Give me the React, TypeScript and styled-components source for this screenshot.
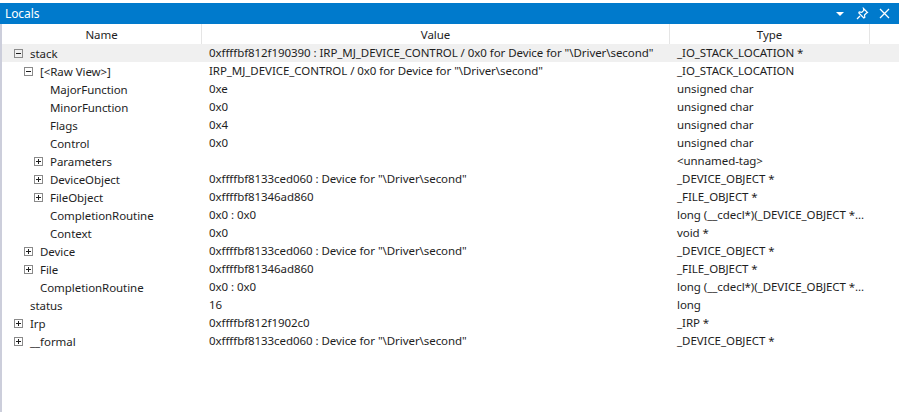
import React from 'react';
import styled, { createGlobalStyle } from 'styled-components';

const GlobalStyle = createGlobalStyle`
  html, body {
    margin: 0;
    padding: 0;
    background: #ffffff;
  }
  body {
    font-family: 'Noto Sans', 'Open Sans', sans-serif;
  }
`;

const COLS = '200px 468px 200px 1fr';

export const Window = styled.div`
  width: 899px;
  height: 412px;
  display: flex;
  flex-direction: column;
  background: #ffffff;
  padding-top: 3px;
  box-sizing: border-box;
  overflow: hidden;
`;

export const TitleBar = styled.div`
  display: flex;
  align-items: center;
  height: 21px;
  background: #007acc;
  color: #ffffff;
  padding: 0 4px 0 5px;
  font-size: 12px;
  letter-spacing: -0.1px;
`;

export const Title = styled.span`
  flex-grow: 1;
`;

export const TitleButton = styled.span`
  display: flex;
  align-items: center;
  justify-content: center;
  width: 22px;
  height: 21px;
`;

export const Body = styled.div`
  flex-grow: 1;
  border-left: 2px solid #cccedb;
  display: flex;
  flex-direction: column;
`;

export const HeaderRow = styled.div`
  display: grid;
  grid-template-columns: ${COLS};
  height: 20px;
  font-size: 11.5px;
  letter-spacing: -0.05px;
  color: #1e1e1e;
`;

export const HeaderCell = styled.div`
  display: flex;
  align-items: center;
  justify-content: center;
  border-right: 1px solid #e5e5e5;
`;

export const Row = styled.div<{ $selected?: boolean }>`
  display: grid;
  grid-template-columns: ${COLS};
  height: 18px;
  font-size: 11.5px;
  letter-spacing: -0.06px;
  color: #1e1e1e;
  background: ${(p) => (p.$selected ? '#f0f0f0' : 'transparent')};
  white-space: nowrap;
`;

export const NameCell = styled.div<{ $level: number }>`
  display: flex;
  align-items: center;
  padding-left: ${(p) => 12 + p.$level * 10}px;
  overflow: hidden;
`;

export const Cell = styled.div`
  display: block;
  line-height: 18px;
  padding-left: 7px;
  overflow: hidden;
  text-overflow: clip;
`;

export const Expander = styled.span<{ $hidden?: boolean }>`
  position: relative;
  width: 9px;
  height: 9px;
  box-sizing: border-box;
  border: 1px solid #8a8a8a;
  margin-right: 7px;
  flex-shrink: 0;
  visibility: ${(p) => (p.$hidden ? 'hidden' : 'visible')};
`;

export const Bar = styled.span<{ $vertical?: boolean }>`
  position: absolute;
  background: #1e1e1e;
  ${(p) =>
    p.$vertical
      ? 'left: 3px; top: 1px; width: 1px; height: 5px;'
      : 'left: 1px; top: 3px; width: 5px; height: 1px;'}
`;

type Node = {
  name: string;
  value: string;
  type: string;
  level: number;
  expand?: 'plus' | 'minus';
  selected?: boolean;
};

const rows: Node[] = [
  { name: 'stack', value: '0xffffbf812f190390 : IRP_MJ_DEVICE_CONTROL / 0x0 for Device for "\\Driver\\second"', type: '_IO_STACK_LOCATION *', level: 0, expand: 'minus', selected: true },
  { name: '[<Raw View>]', value: 'IRP_MJ_DEVICE_CONTROL / 0x0 for Device for "\\Driver\\second"', type: '_IO_STACK_LOCATION', level: 1, expand: 'minus' },
  { name: 'MajorFunction', value: '0xe', type: 'unsigned char', level: 2 },
  { name: 'MinorFunction', value: '0x0', type: 'unsigned char', level: 2 },
  { name: 'Flags', value: '0x4', type: 'unsigned char', level: 2 },
  { name: 'Control', value: '0x0', type: 'unsigned char', level: 2 },
  { name: 'Parameters', value: '', type: '<unnamed-tag>', level: 2, expand: 'plus' },
  { name: 'DeviceObject', value: '0xffffbf8133ced060 : Device for "\\Driver\\second"', type: '_DEVICE_OBJECT *', level: 2, expand: 'plus' },
  { name: 'FileObject', value: '0xffffbf81346ad860', type: '_FILE_OBJECT *', level: 2, expand: 'plus' },
  { name: 'CompletionRoutine', value: '0x0 : 0x0', type: 'long (__cdecl*)(_DEVICE_OBJECT *...', level: 2 },
  { name: 'Context', value: '0x0', type: 'void *', level: 2 },
  { name: 'Device', value: '0xffffbf8133ced060 : Device for "\\Driver\\second"', type: '_DEVICE_OBJECT *', level: 1, expand: 'plus' },
  { name: 'File', value: '0xffffbf81346ad860', type: '_FILE_OBJECT *', level: 1, expand: 'plus' },
  { name: 'CompletionRoutine', value: '0x0 : 0x0', type: 'long (__cdecl*)(_DEVICE_OBJECT *...', level: 1 },
  { name: 'status', value: '16', type: 'long', level: 0 },
  { name: 'Irp', value: '0xffffbf812f1902c0', type: '_IRP *', level: 0, expand: 'plus' },
  { name: '__formal', value: '0xffffbf8133ced060 : Device for "\\Driver\\second"', type: '_DEVICE_OBJECT *', level: 0, expand: 'plus' },
];

const DropIcon = () => (
  <svg width="10" height="6" viewBox="0 0 10 6">
    <path d="M1 1h8L5 5z" fill="#ffffff" />
  </svg>
);

const PinIcon = () => (
  <svg width="13" height="13" viewBox="0 0 13 13" fill="none" stroke="#ffffff" strokeWidth="1.2">
    <path d="M7.5 1.5l4 4-1 .5-2 2 .3 2.5-1 .5-5-5 .5-1 2.5.3 2-2z" />
    <path d="M4 9l-3 3" />
  </svg>
);

const CloseIcon = () => (
  <svg width="11" height="11" viewBox="0 0 11 11" stroke="#ffffff" strokeWidth="1.3">
    <path d="M1 1l9 9M10 1l-9 9" />
  </svg>
);

const Toggle = ({ kind }: { kind?: 'plus' | 'minus' }) => (
  <Expander $hidden={!kind}>
    <Bar />
    {kind === 'plus' && <Bar $vertical />}
  </Expander>
);

export default function App() {
  return (
    <>
      <GlobalStyle />
      <Window>
        <TitleBar>
          <Title>Locals</Title>
          <TitleButton>
            <DropIcon />
          </TitleButton>
          <TitleButton>
            <PinIcon />
          </TitleButton>
          <TitleButton>
            <CloseIcon />
          </TitleButton>
        </TitleBar>
        <Body>
          <HeaderRow>
            <HeaderCell>Name</HeaderCell>
            <HeaderCell>Value</HeaderCell>
            <HeaderCell>Type</HeaderCell>
            <div />
          </HeaderRow>
          {rows.map((r, i) => (
            <Row key={i} $selected={r.selected}>
              <NameCell $level={r.level}>
                <Toggle kind={r.expand} />
                {r.name}
              </NameCell>
              <Cell>{r.value}</Cell>
              <Cell>{r.type}</Cell>
              <div />
            </Row>
          ))}
        </Body>
      </Window>
    </>
  );
}
